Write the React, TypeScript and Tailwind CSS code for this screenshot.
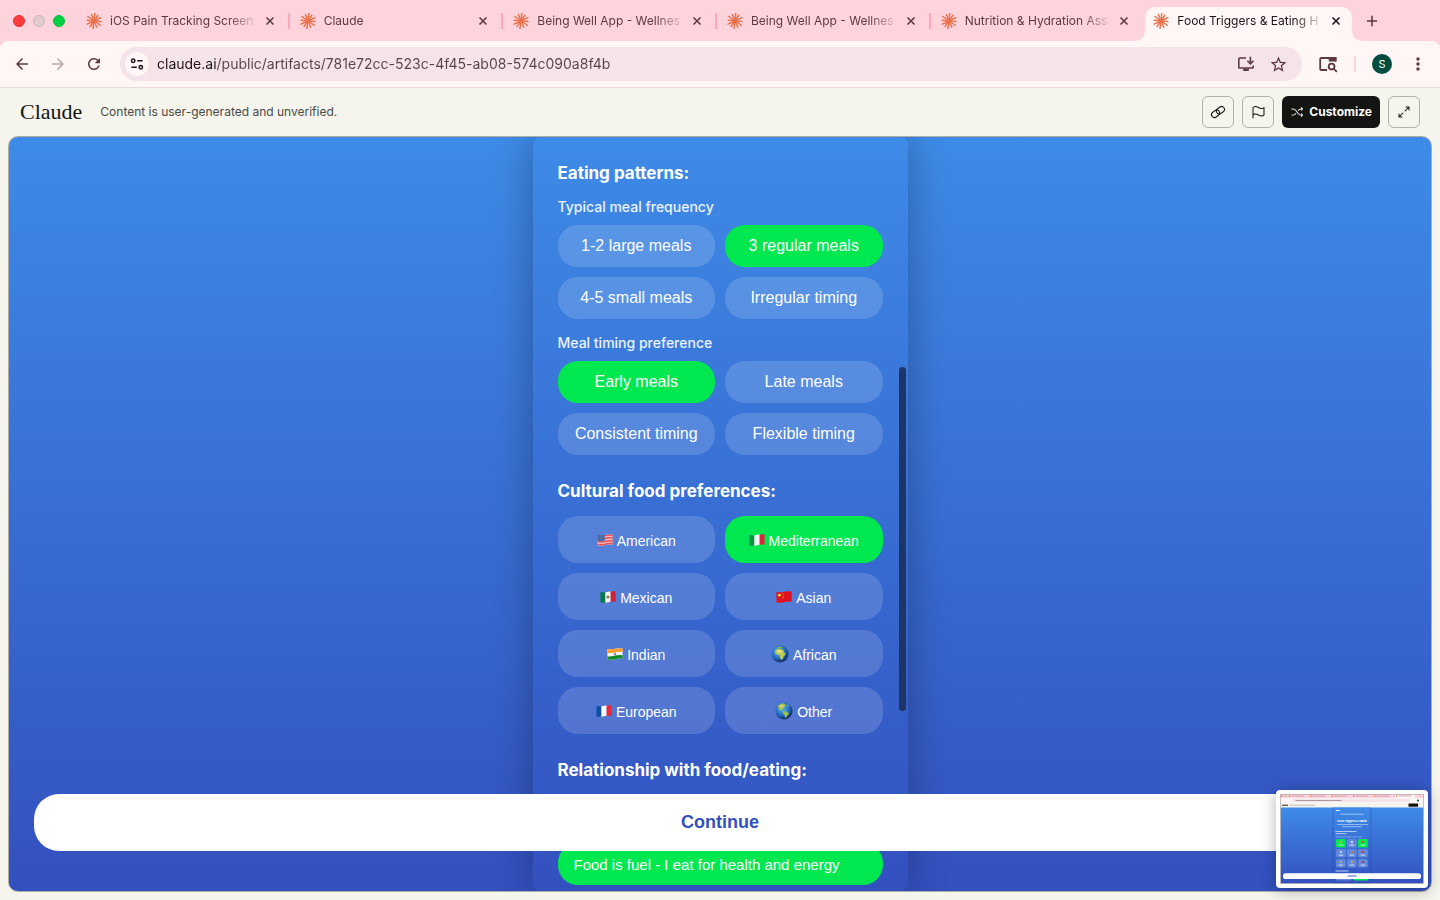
import type { ReactNode } from "react";
import { PiArrowsOutSimple, PiFlag, PiShuffle } from "react-icons/pi";
import {
  MdArrowBack,
  MdArrowForward,
  MdMoreVert,
  MdRefresh,
  MdStarBorder,
} from "react-icons/md";

const RAYS = [0, 28, 58, 88, 118, 150, 182, 210, 240, 270, 300, 332];

function Spark() {
  return (
    <svg viewBox="0 0 16 16" className="size-4 shrink-0" aria-hidden="true">
      {RAYS.map((deg, i) => (
        <path
          key={deg}
          d={i % 2 ? "M8 8V1.1" : "M8 8V0.4"}
          stroke="#e8704a"
          strokeWidth="1.45"
          strokeLinecap="round"
          transform={`rotate(${deg + 6} 8 8)`}
        />
      ))}
    </svg>
  );
}

function Cross() {
  return (
    <svg viewBox="0 0 16 16" className="size-4" aria-hidden="true">
      <path d="M4.5 4.5l7 7M11.5 4.5l-7 7" stroke="currentColor" strokeWidth="1.6" />
    </svg>
  );
}

function Tab({ title, last = false }: { title: string; last?: boolean }) {
  return (
    <div className="flex min-w-0 items-center">
      <div className="flex min-w-0 flex-1 items-center gap-2 pl-2.5">
        <Spark />
        <span className="min-w-0 flex-1 whitespace-nowrap mask-r-from-80% mask-r-to-100%">
          {title}
        </span>
      </div>
      <button type="button" aria-label={`Close ${title}`} className="mr-2.5 ml-1 shrink-0">
        <Cross />
      </button>
      <span className={`h-4 w-0.5 shrink-0 ${last ? "bg-transparent" : "bg-[#ffa6bb]"}`} />
    </div>
  );
}

function ActiveTab({ title }: { title: string }) {
  return (
    <div className="flex min-w-0 pt-[7px] pr-1.5 pl-px">
      <div className="relative flex min-w-0 flex-1 items-center rounded-t-[10px] bg-[#fff6f5] pb-[7px] text-[#1f1317]">
        <svg viewBox="0 0 10 10" className="absolute bottom-0 -left-2.5 size-2.5" aria-hidden="true">
          <path d="M10 0V10H0A10 10 0 0 0 10 0Z" fill="#fff6f5" />
        </svg>
        <svg viewBox="0 0 10 10" className="absolute -right-2.5 bottom-0 size-2.5" aria-hidden="true">
          <path d="M0 0V10H10A10 10 0 0 1 0 0Z" fill="#fff6f5" />
        </svg>
        <div className="flex min-w-0 flex-1 items-center gap-2 pl-2">
          <Spark />
          <span className="min-w-0 flex-1 whitespace-nowrap mask-r-from-80% mask-r-to-100%">
            {title}
          </span>
        </div>
        <button type="button" aria-label={`Close ${title}`} className="mr-2 ml-1 shrink-0">
          <Cross />
        </button>
      </div>
    </div>
  );
}

function TabStrip() {
  return (
    <nav aria-label="Tabs" className="flex h-[41px] bg-[#ffd3dc] text-xs text-[#5c3a43]">
      <div className="flex w-[76px] shrink-0 items-center gap-2 pl-[13px]">
        <span className="size-3 rounded-full border border-[#e62e36] bg-[#ff3b40]" />
        <span className="size-3 rounded-full border border-[#c9b5ba] bg-[#dfcbd0]" />
        <span className="size-3 rounded-full border border-[#0bbd3b] bg-[#00d040]" />
      </div>
      <div className="grid min-w-0 flex-1 grid-cols-6">
        <Tab title="iOS Pain Tracking Screen" />
        <Tab title="Claude" />
        <Tab title="Being Well App - Wellnes" />
        <Tab title="Being Well App - Wellnes" />
        <Tab title="Nutrition & Hydration Ass" last />
        <ActiveTab title="Food Triggers & Eating H" />
      </div>
      <div className="flex w-[82px] shrink-0 items-center pl-1">
        <button type="button" aria-label="New tab">
          <svg viewBox="0 0 20 20" className="size-5" aria-hidden="true">
            <path d="M10 4.8v10.4M4.8 10h10.4" stroke="currentColor" strokeWidth="1.6" />
          </svg>
        </button>
      </div>
    </nav>
  );
}

function Toolbar() {
  return (
    <div className="bg-[#ffd3dc]">
      <div className="flex h-[47px] items-center rounded-t-lg border-b border-[#f1d8dc] bg-[#fff6f5] px-3 text-[#5c3a43]">
        <div className="flex w-[108px] shrink-0 items-center gap-4 pl-px">
          <button type="button" aria-label="Back" className="w-5">
            <MdArrowBack className="size-[18px]" />
          </button>
          <button type="button" aria-label="Forward" className="w-5 text-[#b9a6aa]">
            <MdArrowForward className="size-[18px]" />
          </button>
          <button type="button" aria-label="Reload" className="w-5">
            <MdRefresh className="size-[18px]" />
          </button>
        </div>
        <div className="flex h-[34px] min-w-0 flex-1 items-center rounded-full bg-[#f4e3e9] pr-3.5 pl-[5px]">
          <button
            type="button"
            aria-label="Site settings"
            className="flex size-6 shrink-0 items-center justify-center rounded-full bg-[#fff6f5] text-[#1f1317]"
          >
            <svg viewBox="0 0 14 14" className="size-3.5" fill="none" stroke="currentColor" strokeWidth="1.5" aria-hidden="true">
              <circle cx="3.2" cy="3.8" r="1.7" />
              <path d="M7.2 3.8H12.6M1.4 10.2H6.8" />
              <circle cx="10.8" cy="10.2" r="1.7" />
            </svg>
          </button>
          <input
            type="text"
            aria-label="Address"
            defaultValue="claude.ai/public/artifacts/781e72cc-523c-4f45-ab08-574c090a8f4b"
            className="ml-2 min-w-0 flex-1 bg-[linear-gradient(90deg,#1f1317_59px,#59424a_59px)] bg-clip-text text-sm text-transparent outline-none"
          />
          <button type="button" aria-label="Install app" className="mr-3.5">
            <svg viewBox="0 0 18 18" className="size-[18px]" fill="none" stroke="currentColor" strokeWidth="1.6" aria-hidden="true">
              <path d="M9 3H2.6Q1.8 3 1.8 3.8V12.2Q1.8 13 2.6 13H15.4Q16.2 13 16.2 12.2V10.5" />
              <path d="M6.2 14.8H11.8" strokeWidth="2.4" />
              <path d="M13.4 1.8V8.6M10.4 5.8L13.4 8.8L16.4 5.8" />
            </svg>
          </button>
          <button type="button" aria-label="Bookmark">
            <MdStarBorder className="size-[19px]" />
          </button>
        </div>
        <div className="flex shrink-0 items-center pl-4">
          <button type="button" aria-label="Search side panel">
            <svg viewBox="0 0 20 20" className="size-5" fill="none" stroke="currentColor" strokeWidth="1.8" aria-hidden="true">
              <path d="M9 16H3.2Q2.2 16 2.2 15V5Q2.2 4 3.2 4H17.6V7.6" />
              <path d="M10.8 5.4H18.4" strokeWidth="4.2" />
              <circle cx="13.6" cy="12.6" r="2.9" />
              <path d="M15.7 14.7L18.8 17.8" />
            </svg>
          </button>
          <span className="mx-4 h-4 w-0.5 bg-[#ffd3dc]" />
          <button
            type="button"
            aria-label="Profile"
            className="flex size-5 items-center justify-center rounded-full bg-[#004d40] text-[11px] text-white"
          >
            S
          </button>
          <button type="button" aria-label="More" className="ml-4">
            <MdMoreVert className="size-5" />
          </button>
        </div>
      </div>
    </div>
  );
}

const SQUARE =
  "flex size-8 items-center justify-center rounded-md border border-[#b3b2aa] text-[#141413]";

function ArtifactHeader() {
  return (
    <header className="flex h-12 shrink-0 items-center px-5 text-[#141413]">
      <a href="#home" className="font-['Liberation_Serif',serif] text-[22px] leading-8">
        Claude
      </a>
      <p className="ml-[18px] flex-1 text-xs text-[#4a4a46]">
        Content is user-generated and unverified.
      </p>
      <div className="flex gap-2">
        <button type="button" aria-label="Copy link" className={SQUARE}>
          <svg viewBox="0 0 16 16" className="size-4" fill="none" stroke="currentColor" strokeWidth="1.1" aria-hidden="true">
            <rect x="0.7" y="5.1" width="8.6" height="5.8" rx="2.9" transform="rotate(-36 8 8)" />
            <rect x="6.7" y="5.1" width="8.6" height="5.8" rx="2.9" transform="rotate(-36 8 8)" />
          </svg>
        </button>
        <button type="button" aria-label="Report" className={SQUARE}>
          <PiFlag className="size-4" />
        </button>
        <button
          type="button"
          className="flex h-8 items-center gap-[5px] rounded-md bg-[#141413] px-2 text-xs font-bold text-white"
        >
          <PiShuffle className="size-3.5" />
          Customize
        </button>
        <button type="button" aria-label="Full screen" className={SQUARE}>
          <PiArrowsOutSimple className="size-4" />
        </button>
      </div>
    </header>
  );
}

/* Flags wave slightly: the outline rises to the right of the pole. */
const WAVE = "M0.4 2Q4.5 2.8 8 1.8T15.6 1.4V11.8Q11.5 11.2 8 12.2T0.4 12.6Z";

function Flag({ id, children }: { id: string; children: ReactNode }) {
  return (
    <svg viewBox="0 0 16 14" className="h-3.5 w-4 shrink-0" aria-hidden="true">
      <clipPath id={id}>
        <path d={WAVE} />
      </clipPath>
      <g clipPath={`url(#${id})`}>{children}</g>
    </svg>
  );
}

function Tricolour({ id, colours, children }: { id: string; colours: string[]; children?: ReactNode }) {
  return (
    <Flag id={id}>
      {colours.map((c, i) => (
        <rect key={c} x={i * 5.33} width="5.4" height="14" fill={c} />
      ))}
      {children}
    </Flag>
  );
}

function Globe({ children }: { children: ReactNode }) {
  return (
    <svg viewBox="0 0 18 18" className="size-[18px] shrink-0" aria-hidden="true">
      <defs>
        <radialGradient id="sea" cx="0.4" cy="0.35" r="0.65">
          <stop offset="0" stopColor="#5db7ee" />
          <stop offset="0.65" stopColor="#2268bd" />
          <stop offset="1" stopColor="#10295f" />
        </radialGradient>
      </defs>
      <circle cx="9" cy="9" r="8.5" fill="url(#sea)" />
      {children}
    </svg>
  );
}

const US = (
  <Flag id="us">
    <rect width="16" height="14" fill="#f2b8be" />
    {[2, 4.9, 7.8, 10.7].map((y) => (
      <path key={y} d={`M0 ${y + 0.8}Q4.5 ${y + 1.6} 8 ${y + 0.6}T16 ${y}`} stroke="#e2505c" strokeWidth="1.5" fill="none" />
    ))}
    <path d="M0 1.5H7.6V7.6Q4 8.6 0 7.8Z" fill="#3f649f" />
    <path d="M1.4 4.2h5M1.4 6.2h5" stroke="#8fa9d2" strokeWidth="0.7" strokeDasharray="0.8 0.8" />
  </Flag>
);

const ITALY = <Tricolour id="it" colours={["#0b9246", "#f5f5f5", "#d62839"]} />;

const MEXICO = (
  <Tricolour id="mx" colours={["#0a7a4b", "#f5f5f5", "#d01f35"]}>
    <circle cx="8" cy="7" r="1.5" fill="#8b7340" />
  </Tricolour>
);

const CHINA = (
  <Flag id="cn">
    <rect width="16" height="14" fill="#df1020" />
    <circle cx="3.4" cy="5.2" r="1.4" fill="#ffd42e" />
    <path d="M6.2 3.6h.9M7.2 5.2h.9M7 7h.9M5.8 8.2h.9" stroke="#ffb52e" strokeWidth="0.8" />
  </Flag>
);

const INDIA = (
  <Flag id="in">
    <rect width="16" height="14" fill="#f4f4f4" />
    <path d="M0 0H16V5Q11.5 4.4 8 5.4T0 6Z" fill="#ff9d2e" />
    <path d="M0 9.2Q4.5 9.8 8 8.6T16 8.2V14H0Z" fill="#138a2c" />
    <circle cx="8" cy="7" r="1.1" fill="#6b6fc4" />
  </Flag>
);

const FRANCE = <Tricolour id="fr" colours={["#0c50a5", "#f8f8f8", "#ee2536"]} />;

const AFRICA = (
  <Globe>
    <path d="M5 4.6Q7 3.4 9.4 4.2L12.2 5L13.4 8L15 8.4L12.6 11.4Q12 14.4 10.2 14.8Q8.8 13.4 8.8 10.2L6.2 9.4Q3.8 9 4 6.6Z" fill="#bccb52" />
    <path d="M6 2.4L9 1.5L12 2.2L11 3.6L7.4 3.4Z" fill="#7fb34a" />
    <path d="M6 5.4Q9 4.4 11 6L10.4 7.4L6.4 7.6Z" fill="#f0e08e" />
  </Globe>
);

const AMERICAS = (
  <Globe>
    <path d="M3 3.8Q5.6 1.2 9.4 1.6L10.8 3.6L8.6 5.4L8.2 7L6.2 7.2L7.6 9L6.2 8.8L3.6 6.6Z" fill="#a5c34c" />
    <path d="M8 9L11.4 9.4L14 11.2L12.6 13.6L10.4 16L9.6 13.2L7.8 11Z" fill="#9cc24a" />
    <path d="M5 3.8L8 2.8L7.8 4.6L5.4 5.6Z" fill="#e4da86" />
    <path d="M12.2 2.2L14.4 4L12.8 4.2Z" fill="#c9d99a" />
  </Globe>
);

const ARIAL = "font-['Liberation_Sans',Arial,sans-serif]";
const ON = "bg-[#00e84f]";
const OFF = "bg-white/15";
const HEADING = "text-[17px] leading-7 font-bold";

function Choices({ labels, selected }: { labels: string[]; selected: string }) {
  return (
    <div className="grid grid-cols-2 gap-2.5">
      {labels.map((label) => (
        <button
          key={label}
          type="button"
          aria-pressed={label === selected}
          className={`${ARIAL} h-[42px] rounded-[20px] text-base whitespace-nowrap ${label === selected ? ON : OFF}`}
        >
          {label}
        </button>
      ))}
    </div>
  );
}

const CUISINES: { name: string; icon: ReactNode }[] = [
  { name: "American", icon: US },
  { name: "Mediterranean", icon: ITALY },
  { name: "Mexican", icon: MEXICO },
  { name: "Asian", icon: CHINA },
  { name: "Indian", icon: INDIA },
  { name: "African", icon: AFRICA },
  { name: "European", icon: FRANCE },
  { name: "Other", icon: AMERICAS },
];

function Survey() {
  return (
    <section className="relative mx-auto h-full w-[375px] overflow-hidden rounded-lg bg-linear-to-b from-[#3e8be7] to-[#3350bf] px-[25px] pt-[22px] text-white shadow-[0_0_40px_rgba(0,0,0,0.3)]">
      <h2 className={HEADING}>Eating patterns:</h2>
      <h3 className="mt-2.5 mb-2 text-sm leading-5 font-medium text-white/90">Typical meal frequency</h3>
      <Choices
        labels={["1-2 large meals", "3 regular meals", "4-5 small meals", "Irregular timing"]}
        selected="3 regular meals"
      />
      <h3 className="mt-3.5 mb-2 text-sm leading-5 font-medium text-white/90">Meal timing preference</h3>
      <Choices
        labels={["Early meals", "Late meals", "Consistent timing", "Flexible timing"]}
        selected="Early meals"
      />
      <h2 className={`${HEADING} mt-[22px] mb-[11px]`}>Cultural food preferences:</h2>
      <div className="grid grid-cols-2 gap-2.5">
        {CUISINES.map(({ name, icon }) => (
          <button
            key={name}
            type="button"
            aria-pressed={name === "Mediterranean"}
            className={`${ARIAL} flex h-[47px] items-center justify-center gap-1 rounded-[20px] pt-0.5 text-sm ${name === "Mediterranean" ? ON : OFF}`}
          >
            <span className="pb-0.5">{icon}</span>
            {name}
          </button>
        ))}
      </div>
      <h2 className={`${HEADING} mt-[22px]`}>Relationship with food/eating:</h2>
      <button
        type="button"
        aria-pressed="true"
        className={`${ARIAL} mt-[59px] h-[42px] w-full rounded-[20px] px-4 pt-0.5 text-left text-[15px] ${ON}`}
      >
        Food is fuel - I eat for health and energy
      </button>
      <div className="absolute top-[230px] right-0.5 h-[344px] w-[7px] rounded-full bg-[#1c3668]" />
    </section>
  );
}

const MINI_TILES: { x: number; y: number; on: boolean; dot: string }[] = [
  { x: 56, y: 45, on: true, dot: "#f4a03c" },
  { x: 67, y: 45, on: false, dot: "#e5e9f2" },
  { x: 78, y: 45, on: true, dot: "#d8432c" },
  { x: 56, y: 55, on: false, dot: "#c9d6ee" },
  { x: 67, y: 55, on: false, dot: "#e8742c" },
  { x: 78, y: 55, on: false, dot: "#d83030" },
  { x: 56, y: 65, on: false, dot: "#cbb27a" },
  { x: 67, y: 65, on: false, dot: "#e0a040" },
  { x: 78, y: 65, on: false, dot: "#b03a5c" },
];

function Preview() {
  return (
    <figure className="absolute right-3 bottom-3 rounded bg-white p-1 shadow-[0_2px_16px_rgba(0,0,0,0.3)]">
      <svg viewBox="0 0 144 90" className="h-[90px] w-36" role="img" aria-label="Screen capture">
        <defs>
          <linearGradient id="mini" x1="0" y1="0" x2="0" y2="1">
            <stop offset="0" stopColor="#3e8be7" />
            <stop offset="1" stopColor="#3350bf" />
          </linearGradient>
        </defs>
        <rect width="144" height="90" fill="#f4f3ec" />
        <rect width="144" height="4.2" fill="#ffd3dc" />
        <rect x="115" y="0.8" width="20" height="4" fill="#fff6f5" />
        <circle cx="1.9" cy="2" r="0.7" fill="#ff3b40" />
        <circle cx="5.9" cy="2" r="0.7" fill="#00d040" />
        {[8.8, 30, 51.5, 73, 94, 116].map((x) => (
          <g key={x}>
            <circle cx={x + 0.7} cy="2" r="0.8" fill="#e8704a" />
            <rect x={x + 2.4} y="1.6" width="13" height="0.8" fill="#c99aa6" />
          </g>
        ))}
        <rect y="4.2" width="144" height="4.6" fill="#fff6f5" />
        <rect x="12" y="4.7" width="118" height="3.4" rx="1.7" fill="#f4e3e9" />
        <rect x="15.5" y="6" width="46" height="0.9" fill="#a58f96" />
        <circle cx="138" cy="6.4" r="1" fill="#004d40" />
        <rect x="2" y="10.6" width="6" height="1.3" fill="#55544f" />
        <rect x="10" y="10.8" width="25" height="0.8" fill="#b1b0a9" />
        <rect x="128.5" y="9.6" width="9.6" height="3.2" rx="0.6" fill="#141413" />
        <rect x="0.8" y="13.6" width="142.4" height="75.6" rx="1" fill="url(#mini)" />
        <rect x="52.2" y="13.6" width="39.2" height="75.6" fill="#1f3fa0" opacity="0.3" />
        <rect x="53.6" y="13.6" width="36.6" height="75.6" fill="url(#mini)" />
        <rect x="56" y="16" width="4" height="1" fill="#dce9fb" />
        <rect x="60.5" y="19.7" width="23" height="0.9" fill="#a9c8f3" />
        <text x="72" y="28" fontSize="2.7" fontWeight="700" fill="#fff" textAnchor="middle">
          Food Triggers &amp; Habits
        </text>
        <rect x="57" y="30" width="31" height="0.8" fill="#a9c8f3" />
        <rect x="62" y="32.3" width="20" height="0.8" fill="#a9c8f3" />
        <rect x="55.5" y="37" width="21" height="0.9" fill="#b9d2f6" />
        <rect x="55.5" y="39.2" width="11" height="0.9" fill="#b9d2f6" />
        <rect x="55.5" y="42.6" width="27" height="0.7" fill="#8fb5ee" />
        {MINI_TILES.map(({ x, y, on, dot }) => (
          <g key={`${x}-${y}`}>
            <rect x={x} y={y} width="9.8" height="8.6" rx="1.6" fill={on ? "#00e84f" : "#6288dc"} />
            <rect x={x + 3.9} y={y + 1.9} width="2" height="2" rx="0.6" fill={dot} />
            <rect x={x + 2.6} y={y + 5.6} width="4.6" height="0.9" fill="#fff" opacity="0.8" />
          </g>
        ))}
        <rect x="55.5" y="76.5" width="13" height="1" fill="#b9d2f6" />
        <rect x="56" y="82" width="15.5" height="4.6" rx="1.6" fill="#6288dc" />
        <rect x="73" y="82" width="15.5" height="4.6" rx="1.6" fill="#00e84f" />
        <rect x="3" y="79.3" width="138" height="5.8" rx="2.6" fill="#fff" />
        <text x="72" y="83" fontSize="2" fontWeight="700" fill="#3350bf" textAnchor="middle">
          Continue
        </text>
        <rect x="0.5" y="0.5" width="143" height="89" fill="none" stroke="#8f8f96" strokeOpacity="0.5" />
      </svg>
    </figure>
  );
}

export default function App() {
  return (
    <div className="relative flex h-screen flex-col overflow-hidden bg-[#f5f4ed] font-[Inter,'Liberation_Sans',sans-serif]">
      <TabStrip />
      <Toolbar />
      <ArtifactHeader />
      <main className="relative mx-2 mb-2 min-h-0 flex-1 overflow-hidden rounded-[10px] border border-[#aeada5] bg-linear-to-b from-[#3e8be7] to-[#3350bf]">
        <Survey />
        <div className="absolute inset-x-0 bottom-10 px-[25px]">
          <button
            type="button"
            className={`${ARIAL} h-[57px] w-full rounded-[25px] bg-white pb-0.5 text-lg font-bold text-[#3350bf]`}
          >
            Continue
          </button>
        </div>
      </main>
      <Preview />
    </div>
  );
}
